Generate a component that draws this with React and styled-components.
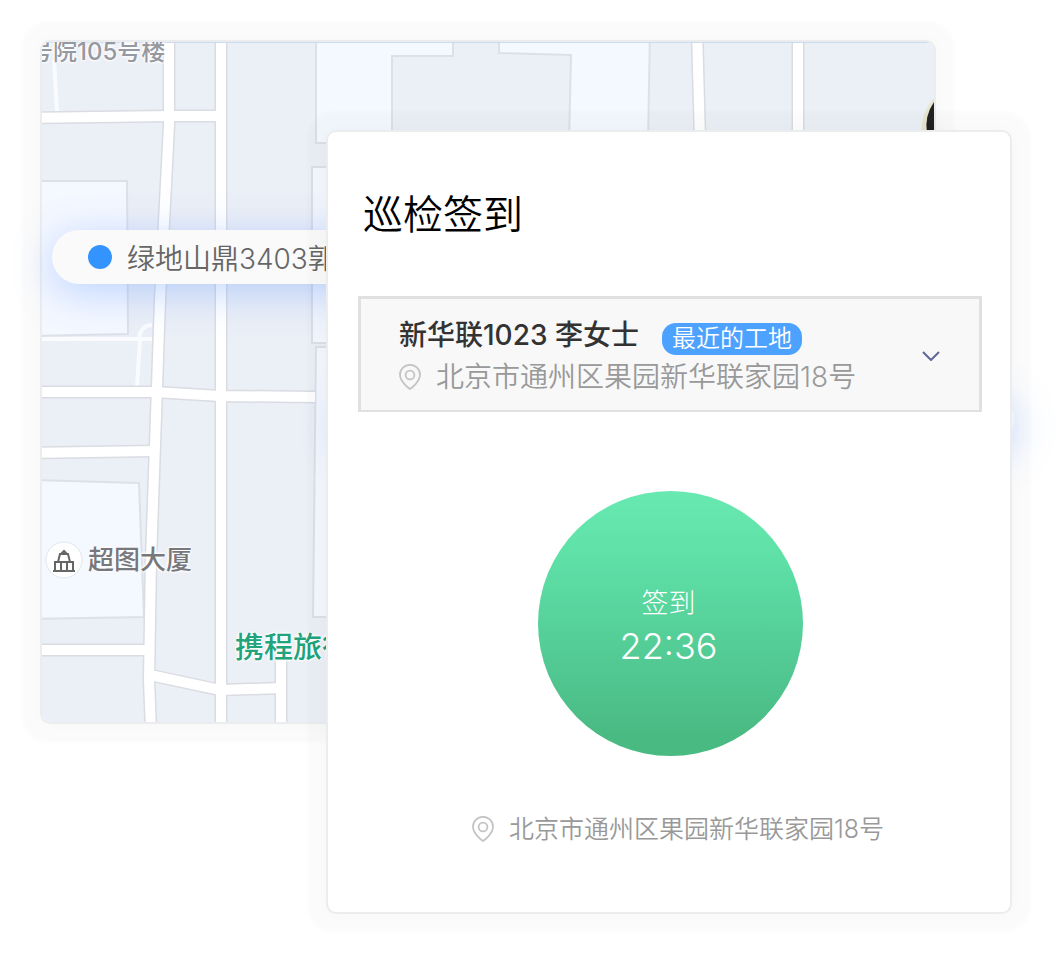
import React from 'react';
import styled, { createGlobalStyle, css } from 'styled-components';

const GlobalStyle = createGlobalStyle`
* {
  box-sizing: border-box;
}
body {
  margin: 0;
  background: #fff;
  font-family: Inter, "Noto Sans CJK SC", sans-serif;
  font-weight: 350;
}
h1, p {
  margin: 0;
}
button, select {
  font: inherit;
  border: 0;
  padding: 0;
}
`;

const Scene = styled.main`
display: grid;
grid-template-columns: 286px 1fr 76px;
grid-template-rows: 90px auto 190px;
padding: 40px 52px 42px 40px;
overflow: hidden;
`;

const panel = css`
border: 2px solid #ebecee;
border-radius: 10px;
box-shadow: 0 0 3px 19px rgba(0,0,0,0.015), 0 0 16px rgba(0,0,0,0.02);
`;

const Map = styled.section`
${panel}
grid-area: 1 / 1 / 3 / 3;
position: relative;
`;

const MapView = styled.div`
position: absolute;
inset: 0;
overflow: hidden;
border-radius: 8px;
background: #ebeff6;
`;

const Streets = styled.svg`
display: block;
width: 100%;
height: 100%;
`;

const Place = styled.span`
position: absolute;
left: ${p => p.$x}px;
top: ${p => p.$y}px;
display: flex;
align-items: center;
gap: 5px;
font-size: ${p => p.$size}px;
line-height: 38px;
font-weight: 500;
white-space: nowrap;
color: ${p => p.$color};
text-shadow: 0 0 2px #fff, 0 0 3px #fff, 0 0 3px #fff, 0 0 4px #fff;
`;

const Site = styled.div`
position: absolute;
left: ${p => p.$x}px;
top: ${p => p.$y}px;
width: ${p => p.$w}px;
height: 54px;
padding-left: 36px;
display: flex;
align-items: center;
gap: 15px;
border-radius: 27px;
background: #fafafa;
box-shadow: 0 8px 40px rgba(80,140,255,0.35);
color: #666;
font-size: 28px;
white-space: nowrap;
`;

const Dot = styled.i`
width: 24px;
height: 24px;
border-radius: 50%;
background: #3494ff;
`;

const Card = styled.section`
${panel}
grid-area: 2 / 2 / 4 / 4;
position: relative;
display: flex;
flex-direction: column;
padding: 55px 28px 63px 30px;
background: #fff;
`;

const Title = styled.h1`
padding-left: 5px;
font-size: 40px;
line-height: 56px;
font-weight: 350;
color: #000;
`;

const SiteBox = styled.div`
display: flex;
align-items: center;
justify-content: space-between;
margin-top: 53px;
padding: 16px 39px 13px 38px;
border: 3px solid #e0e0e0;
border-bottom-width: 2px;
background: #f8f8f8;
`;

const SiteInfo = styled.div`
display: grid;
gap: 2px;
`;

const NameRow = styled.div`
display: flex;
align-items: flex-end;
gap: 23px;
height: 40px;
`;

const SiteSelect = styled.select`
appearance: none;
height: 40px;
background: transparent;
font-size: 28px;
font-weight: 450;
color: #333;
cursor: pointer;
`;

const Badge = styled.span`
height: 32px;
padding: 0 10px;
border-radius: 14px;
background: #4da2ff;
color: #fff;
font-size: 24px;
line-height: 32px;
`;

const Address = styled.p`
display: flex;
align-items: center;
gap: 15px;
font-size: ${p => p.$size}px;
line-height: 40px;
color: #999;
white-space: nowrap;
`;

const Arrow = styled.label`
display: flex;
cursor: pointer;
`;

const SignButton = styled.button`
align-self: center;
display: flex;
flex-direction: column;
align-items: center;
justify-content: center;
width: 265px;
height: 265px;
margin: 79px 0 53px;
padding: 5px 3px 0 0;
border-radius: 50%;
background: linear-gradient(#68e9b1, #5ee0a7 25%, #53cb95 62%, #4aba83 92%);
color: #fff;
font-size: 27px;
font-weight: 300;
line-height: 40px;
cursor: pointer;
`;

const Time = styled.time`
font-size: 36px;
line-height: 44px;
`;

const Footer = styled.footer`
display: flex;
justify-content: center;
padding-left: 16px;
`;

const PinIcon = () => (
    <svg width="22" height="26" viewBox="0 0 22 26" fill="none" stroke="#c4c4c4" strokeWidth="1.8" aria-hidden="true">
        <path d="M11 25 C9.5 24 1 17.5 1 10.8 A10 10 0 0 1 21 10.8 C21 17.5 12.5 24 11 25Z" />
        <circle cx="11" cy="11" r="4.4" />
    </svg>
)

const TowerIcon = () => (
    <svg width="38" height="38" viewBox="0 0 38 38" fill="none" stroke="#666" strokeWidth="2" aria-hidden="true">
        <circle cx="19" cy="19" r="18" fill="#fff" stroke="#e2e4ea" strokeWidth="1" />
        <path d="M8 30H30M10 29V21H28V29M16 29V21M22 29V21M13 21L15 13H23L25 21M16 13L19 10L22 13" />
    </svg>
)

const block = { fill: '#f4f8ff', stroke: '#dde0e8', strokeWidth: 2 };

const MapStreets = () => (
    <Streets viewBox="42 42 892 680" preserveAspectRatio="xMinYMin slice" aria-hidden="true">
        <g {...block}>
            <path d="M30 181H127L128 334L30 336Z" />
            <path d="M30 480L139 483L144 617L30 619Z" />
            <path d="M340 167H312V343H340Z" />
            <path d="M340 347H316L313 617H340Z" />
            <path d="M316 30H453V56H392V143H316Z" />
            <path d="M499 30V53L571 55L569 143H648L650 30Z" />
        </g>
        {/* narrow lanes */}
        <g fill="none" stroke="#f9fbff" strokeWidth="4">
            <path d="M54 60L57 112M30 339H152M140 340L137 386M139 338Q141 325 152 325" />
        </g>
        {/* every street is painted twice, the wide pass leaves its kerb */}
        {['#dadce2', '#fff'].map((color, i) => (
            <g key={color} fill="none" stroke={color} strokeWidth={i ? 10 : 13}>
                <path d="M169 30V125L160 300L151 560L149 680L151 730" />
                <path d="M221 30V730" />
                <path d="M30 118L169 116H220" />
                <path d="M30 392H155L220 396L315 397" />
                <path d="M30 453L154 451" />
                <path d="M30 650H149" />
                <path d="M150 675L220 690L281 688" />
                <path d="M281 650V730" />
                <path d="M697 30L700 140" />
                <path d="M798 30V140" />
            </g>
        ))}
        <path d="M42 42.500H934" stroke="#ccdaf2" />
        <path d="M934 98Q920 114 922 134H934Z" fill="#e8e5cf" />
        <path d="M934 102Q924 116 927 134H934Z" fill="#222" />
    </Streets>
)

const App = () => {
    return (
        <>
            <GlobalStyle />
            <Scene>
                <Map>
                    <MapView>
                        <MapStreets />
                        <Place $x={-13} $y={-9} $size={24} $color="#9599a1">号院105号楼</Place>
                        <Place $x={3} $y={499} $size={26} $color="#77787c"><TowerIcon />超图大厦</Place>
                        <Place $x={193} $y={587} $size={29} $color="#21a37b">携程旅行</Place>
                    </MapView>
                    <Site $x={10} $y={188} $w={500}>
                        <Dot />
                        绿地山鼎3403郭
                    </Site>
                    <Site $x={300} $y={350} $w={672} />
                </Map>
                <Card>
                    <Title>巡检签到</Title>
                    <SiteBox>
                        <SiteInfo>
                            <NameRow>
                                <SiteSelect id="site" aria-label="新华联1023 李女士">
                                    <option>新华联1023 李女士</option>
                                </SiteSelect>
                                <Badge>最近的工地</Badge>
                            </NameRow>
                            <Address $size={28}><PinIcon />北京市通州区果园新华联家园18号</Address>
                        </SiteInfo>
                        <Arrow htmlFor="site">
                            <svg width="18" height="10" viewBox="0 0 18 10" fill="none" stroke="#5f6796" strokeWidth="2" aria-hidden="true">
                                <path d="M1 1L9 9L17 1" />
                            </svg>
                        </Arrow>
                    </SiteBox>
                    <SignButton type="button">
                        签到
                        <Time>22:36</Time>
                    </SignButton>
                    <Footer>
                        <Address $size={25}><PinIcon />北京市通州区果园新华联家园18号</Address>
                    </Footer>
                </Card>
            </Scene>
        </>
    )
}

export default App
